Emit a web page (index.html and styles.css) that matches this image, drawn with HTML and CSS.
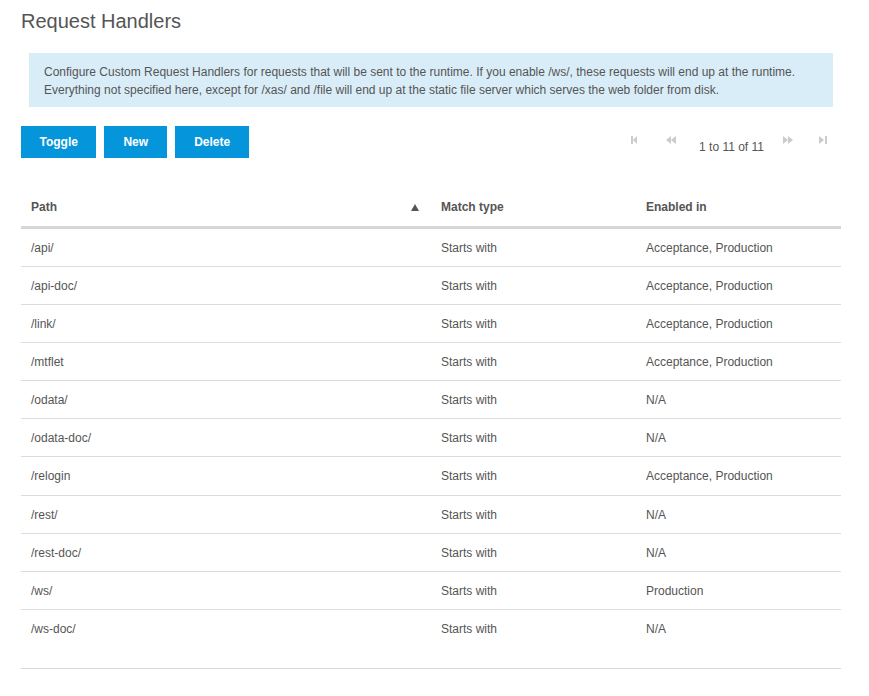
FILE: index.html
```html
<!DOCTYPE html>
<html>
<head>
<meta charset="utf-8">
<link rel="stylesheet" href="styles.css">
</head>
<body>
<div class="page">
  <h1 class="title">Request Handlers</h1>
  <div class="info">Configure Custom Request Handlers for requests that will be sent to the runtime. If you enable /ws/, these requests will end up at the runtime. Everything not specified here, except for /xas/ and /file will end up at the static file server which serves the web folder from disk.</div>
  <div class="toolbar">
    <div class="actions">
      <button class="btn btn-toggle">Toggle</button>
      <button class="btn">New</button>
      <button class="btn">Delete</button>
    </div>
    <div class="paging">
      <svg class="picon p-first" width="6" height="8" viewBox="0 0 6 8"><rect x="0" y="0" width="2" height="8"/><polygon points="6,0 2,4 6,8"/></svg>
      <svg class="picon p-prev" width="10" height="8" viewBox="0 0 10 8"><polygon points="5,0 0,4 5,8"/><polygon points="10,0 5,4 10,8"/></svg>
      <span class="ptext">1 to 11 of 11</span>
      <svg class="picon p-next" width="11" height="8" viewBox="0 0 11 8"><polygon points="0,0 5,4 0,8"/><polygon points="5,0 10,4 5,8"/></svg>
      <svg class="picon p-last" width="8" height="8" viewBox="0 0 8 8"><polygon points="0,0 5,4 0,8"/><rect x="6" y="0" width="2" height="8"/></svg>
    </div>
  </div>
  <div class="grid">
    <div class="row head">
      <div class="cell c-path">Path<svg class="sort" width="8" height="7" viewBox="0 0 8 7"><polygon points="4,0 8,7 0,7"/></svg></div>
      <div class="cell c-type">Match type</div>
      <div class="cell c-env">Enabled in</div>
    </div>
    <div class="row"><div class="cell c-path">/api/</div><div class="cell c-type">Starts with</div><div class="cell c-env">Acceptance, Production</div></div>
    <div class="row"><div class="cell c-path">/api-doc/</div><div class="cell c-type">Starts with</div><div class="cell c-env">Acceptance, Production</div></div>
    <div class="row"><div class="cell c-path">/link/</div><div class="cell c-type">Starts with</div><div class="cell c-env">Acceptance, Production</div></div>
    <div class="row"><div class="cell c-path">/mtflet</div><div class="cell c-type">Starts with</div><div class="cell c-env">Acceptance, Production</div></div>
    <div class="row"><div class="cell c-path">/odata/</div><div class="cell c-type">Starts with</div><div class="cell c-env">N/A</div></div>
    <div class="row"><div class="cell c-path">/odata-doc/</div><div class="cell c-type">Starts with</div><div class="cell c-env">N/A</div></div>
    <div class="row row-tall"><div class="cell c-path">/relogin</div><div class="cell c-type">Starts with</div><div class="cell c-env">Acceptance, Production</div></div>
    <div class="row"><div class="cell c-path">/rest/</div><div class="cell c-type">Starts with</div><div class="cell c-env">N/A</div></div>
    <div class="row"><div class="cell c-path">/rest-doc/</div><div class="cell c-type">Starts with</div><div class="cell c-env">N/A</div></div>
    <div class="row"><div class="cell c-path">/ws/</div><div class="cell c-type">Starts with</div><div class="cell c-env">Production</div></div>
    <div class="row"><div class="cell c-path">/ws-doc/</div><div class="cell c-type">Starts with</div><div class="cell c-env">N/A</div></div>
  </div>
</div>
</body>
</html>
```

FILE: styles.css
```css
* { box-sizing: border-box; }
html, body { margin: 0; padding: 0; background: #fff; }
body {
  font-family: "Liberation Sans", Arial, sans-serif;
  font-size: 12px;
  color: #555;
}
.page {
  width: 862px;
  padding: 9px 21px 0 21px;
}
.title {
  margin: 0;
  font-size: 20px;
  line-height: 24px;
  font-weight: normal;
  color: #555;
}
.info {
  margin: 20px 8px 0 8px;
  padding: 10px 15px 8px 15px;
  background: #d9edf8;
  line-height: 18px;
  color: #555;
}
.toolbar {
  display: flex;
  justify-content: space-between;
  align-items: flex-start;
  margin-top: 19px;
  height: 32px;
}
.actions { display: flex; gap: 8px; }
.btn {
  height: 32px;
  padding: 0 19px;
  border: 0;
  background: #0595db;
  color: #fff;
  font-family: "Liberation Sans", Arial, sans-serif;
  font-size: 12px;
  font-weight: bold;
}
.btn-toggle { padding: 0 18.5px; }
.paging {
  display: flex;
  align-items: flex-start;
  padding-right: 14px;
}
.picon {
  display: block;
  margin-top: 10px;
  fill: #cbcbcb;
}
.p-prev { margin-left: 29px; }
.p-next { margin-left: 19px; }
.p-last { margin-left: 25px; }
.ptext {
  margin: 14px 0 0 23px;
  line-height: 14px;
  color: #555;
}
.grid {
  margin-top: 30px;
  padding-bottom: 21px;
  border-bottom: 1px solid #d9d9d9;
}
.row {
  display: flex;
  height: 38px;
  align-items: center;
  border-bottom: 1px solid #dcdcdc;
}
.row-tall { height: 39px; }
.row:last-child { border-bottom: 0; height: 37px; }
.row.head {
  height: 41px;
  border-bottom: 3px solid #d6d6d6;
  font-weight: bold;
}
.cell { padding: 0 10px; }
.c-path { width: 410px; display: flex; justify-content: space-between; align-items: center; padding-right: 12px; }
.c-type { width: 205px; }
.c-env { width: 205px; }
.sort { fill: #555; display: block; }
```
